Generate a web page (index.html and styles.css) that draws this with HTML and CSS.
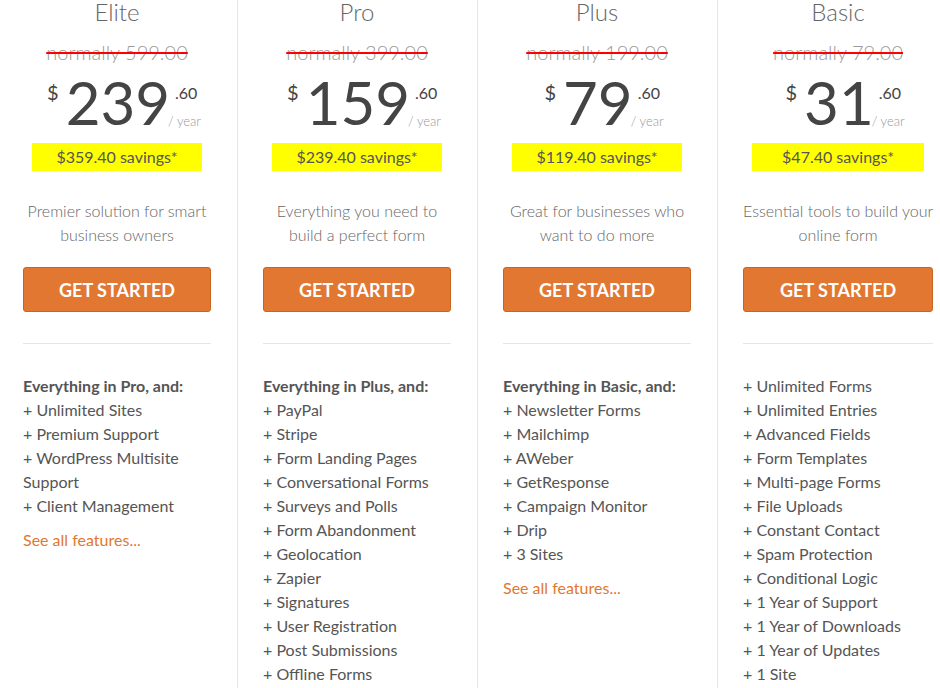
FILE: index.html
```html
<!DOCTYPE html>
<html lang="en">
<head>
<meta charset="utf-8">
<title>Pricing</title>
<link rel="stylesheet" href="styles.css">
</head>
<body>
<div class="plans">
  <section class="plan">
    <h2 class="title">Elite</h2>
    <div class="normal">normally 599.00</div>
    <div class="price"><span class="cur">$</span><span class="amount">239</span><span class="tail"><span class="cents">.60</span><span class="per">/ year</span></span></div>
    <div class="savings">$359.40 savings*</div>
    <p class="desc">Premier solution for smart<br>business owners</p>
    <a class="btn" href="#">GET STARTED</a>
    <hr class="sep">
    <ul class="features">
      <li class="head">Everything in Pro, and:</li>
      <li>+ Unlimited Sites</li>
      <li>+ Premium Support</li>
      <li>+ WordPress Multisite Support</li>
      <li>+ Client Management</li>
    </ul>
    <a class="more" href="#">See all features...</a>
  </section>
  <section class="plan">
    <h2 class="title">Pro</h2>
    <div class="normal">normally 399.00</div>
    <div class="price"><span class="cur">$</span><span class="amount">159</span><span class="tail"><span class="cents">.60</span><span class="per">/ year</span></span></div>
    <div class="savings">$239.40 savings*</div>
    <p class="desc">Everything you need to<br>build a perfect form</p>
    <a class="btn" href="#">GET STARTED</a>
    <hr class="sep">
    <ul class="features">
      <li class="head">Everything in Plus, and:</li>
      <li>+ PayPal</li>
      <li>+ Stripe</li>
      <li>+ Form Landing Pages</li>
      <li>+ Conversational Forms</li>
      <li>+ Surveys and Polls</li>
      <li>+ Form Abandonment</li>
      <li>+ Geolocation</li>
      <li>+ Zapier</li>
      <li>+ Signatures</li>
      <li>+ User Registration</li>
      <li>+ Post Submissions</li>
      <li>+ Offline Forms</li>
    </ul>
  </section>
  <section class="plan">
    <h2 class="title">Plus</h2>
    <div class="normal">normally 199.00</div>
    <div class="price"><span class="cur">$</span><span class="amount">79</span><span class="tail"><span class="cents">.60</span><span class="per">/ year</span></span></div>
    <div class="savings">$119.40 savings*</div>
    <p class="desc">Great for businesses who<br>want to do more</p>
    <a class="btn" href="#">GET STARTED</a>
    <hr class="sep">
    <ul class="features">
      <li class="head">Everything in Basic, and:</li>
      <li>+ Newsletter Forms</li>
      <li>+ Mailchimp</li>
      <li>+ AWeber</li>
      <li>+ GetResponse</li>
      <li>+ Campaign Monitor</li>
      <li>+ Drip</li>
      <li>+ 3 Sites</li>
    </ul>
    <a class="more" href="#">See all features...</a>
  </section>
  <section class="plan">
    <h2 class="title">Basic</h2>
    <div class="normal">normally 79.00</div>
    <div class="price"><span class="cur">$</span><span class="amount">31</span><span class="tail"><span class="cents">.60</span><span class="per">/ year</span></span></div>
    <div class="savings">$47.40 savings*</div>
    <p class="desc">Essential tools to build your<br>online form</p>
    <a class="btn" href="#">GET STARTED</a>
    <hr class="sep">
    <ul class="features">
      <li>+ Unlimited Forms</li>
      <li>+ Unlimited Entries</li>
      <li>+ Advanced Fields</li>
      <li>+ Form Templates</li>
      <li>+ Multi-page Forms</li>
      <li>+ File Uploads</li>
      <li>+ Constant Contact</li>
      <li>+ Spam Protection</li>
      <li>+ Conditional Logic</li>
      <li>+ 1 Year of Support</li>
      <li>+ 1 Year of Downloads</li>
      <li>+ 1 Year of Updates</li>
      <li>+ 1 Site</li>
    </ul>
  </section>
</div>
</body>
</html>
```

FILE: styles.css
```css
html, body {
  margin: 0;
  padding: 0;
  overflow: hidden;
  background: #fff;
}
body {
  font-family: Lato, "Open Sans", "Liberation Sans", sans-serif;
  color: #555;
  font-size: 16px;
}
.plans {
  display: flex;
  margin-left: -3px;
  width: 960px;
  height: 688px;
}
.plan {
  flex: 0 0 240px;
  box-sizing: border-box;
  border-left: 1px solid #e6e6e6;
  padding: 0 26px 0 25px;
  display: flex;
  flex-direction: column;
}
.title {
  margin: 0;
  font-size: 24px;
  line-height: 24px;
  font-weight: 300;
  color: #666;
  text-align: center;
}
.normal {
  margin-top: 16px;
  font-size: 20px;
  line-height: 24px;
  font-weight: 300;
  color: #999;
  text-align: center;
  align-self: center;
  text-decoration: line-through;
  text-decoration-color: #f00;
  text-decoration-thickness: 2px;
}
.price {
  margin-top: 8px;
  display: flex;
  justify-content: center;
  align-items: flex-start;
  color: #444;
  padding-left: 14px;
}
.cur {
  margin-top: 10px;
  font-size: 20px;
  line-height: 20px;
  font-weight: 400;
  margin-right: 7px;
}
.amount {
  font-size: 60px;
  line-height: 60px;
  font-weight: 400;
}
.tail {
  display: flex;
  flex-direction: column;
  margin-top: 13px;
  margin-left: -2px;
}
.cents {
  font-size: 16px;
  line-height: 16px;
  font-weight: 400;
  padding-left: 7px;
}
.per {
  margin-top: 14px;
  font-size: 13px;
  line-height: 13px;
  font-weight: 300;
  color: #999;
  white-space: nowrap;
}
.savings {
  margin: 11px 9px 0;
  height: 28px;
  line-height: 28px;
  background: #ffff00;
  text-align: center;
  font-size: 16px;
  color: #555;
}
.desc {
  margin: 28px 0 0;
  font-size: 16px;
  line-height: 24px;
  font-weight: 300;
  color: #666;
  text-align: center;
  white-space: nowrap;
}
.btn {
  margin-top: 20px;
  display: block;
  height: 45px;
  box-sizing: border-box;
  border: 1px solid #c9651f;
  border-radius: 3px;
  background: #e27731;
  color: #fff;
  font-weight: 700;
  font-size: 18px;
  line-height: 44px;
  text-align: center;
  text-decoration: none;
}
.sep {
  margin: 31px 0 0;
  border: 0;
  height: 1px;
  background: #e6e6e6;
}
.features {
  list-style: none;
  margin: 30px 0 0;
  padding: 0;
  font-size: 16px;
  line-height: 24px;
  color: #555;
}
.features .head {
  font-weight: 700;
}
.more {
  margin-top: 10px;
  font-size: 16px;
  line-height: 24px;
  color: #e27731;
  text-decoration: none;
}
```
